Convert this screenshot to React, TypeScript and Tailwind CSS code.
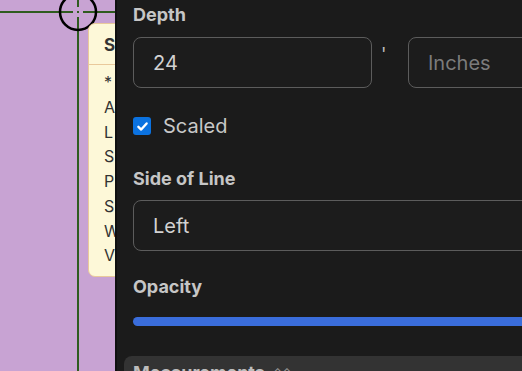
import React from "react";

const tipLines = ["*", "A", "L", "S", "P", "S", "W", "V"];

function Crosshair() {
  // marker drawn on the map canvas
  return (
    <svg className="absolute left-0 top-0" width="115" height="371" viewBox="0 0 115 371">
      <g stroke="#2f5b1f" strokeWidth="2">
        <line x1="0" y1="12" x2="73" y2="12" />
        <line x1="83" y1="12" x2="115" y2="12" />
        <line x1="78" y1="0" x2="78" y2="7" />
        <line x1="78" y1="17" x2="78" y2="371" />
        <line x1="77" y1="12" x2="79" y2="12" />
      </g>
      <circle cx="78" cy="12" r="18" fill="none" stroke="#000" strokeWidth="2.5" />
    </svg>
  );
}

function Tooltip() {
  return (
    <div className="absolute left-[88px] top-[23px] w-[160px] h-[254px] rounded-[7px] border border-[#e9c99b] bg-[#fdf8d8] text-[#333]">
      <div className="h-[41px] border-b border-[#e9c99b] pl-[15px] pt-[9px] text-[17px] font-bold leading-[24px]">
        Segment
      </div>
      <div className="pl-[15px] pt-[5px] text-[16px] leading-[24.75px]">
        {tipLines.map((l, i) => (
          <div key={i}>{l}</div>
        ))}
      </div>
    </div>
  );
}

function Field({ value, placeholder, width }: { value?: string; placeholder?: string; width: string }) {
  return (
    <div
      className={`${width} h-[51px] shrink-0 rounded-[8px] border border-[#5c5c5c] bg-[#1c1c1c] px-[19px] flex items-center text-[20px]`}
    >
      {value ? <span className="text-[#d2d2d2]">{value}</span> : <span className="text-[#7b7b7b]">{placeholder}</span>}
    </div>
  );
}

export default function App() {
  return (
    <div
      className="w-[522px] h-[371px] overflow-hidden flex bg-[#c8a3d3]"
      style={{ fontFamily: "Inter, 'Noto Sans', sans-serif" }}
    >
      {/* map canvas */}
      <div className="relative w-[115px] h-full shrink-0">
        <Crosshair />
        <Tooltip />
      </div>

      {/* side panel */}
      <div className="relative z-10 flex-1 h-full overflow-hidden bg-[#1b1b1b] border-l-2 border-[#101010]">
        <div className="w-[600px] pl-[16px] pt-[3px]">
          <div className="text-[18px] font-bold leading-[24px] text-[#c6c6c6]">Depth</div>
          <div className="mt-[10px] flex items-start">
            <Field value="24" width="w-[239px]" />
            <div className="w-[36px] pl-[9px] pt-[4px] text-[18px] text-[#bdbdbd]">'</div>
            <Field placeholder="Inches" width="w-[239px]" />
          </div>

          <div className="mt-[26px] flex items-center gap-[12px]">
            <div className="w-[18px] h-[18px] rounded-[3px] bg-[#0b72e0] flex items-center justify-center">
              <svg width="13" height="13" viewBox="0 0 12 12" fill="none">
                <path d="M2.2 6.3 4.8 8.8 9.8 3.2" stroke="#fff" strokeWidth="2.2" strokeLinecap="round" strokeLinejoin="round" />
              </svg>
            </div>
            <span className="text-[20px] leading-[24px] text-[#c8c8c8]">Scaled</span>
          </div>

          <div className="mt-[29px] text-[18px] font-bold leading-[24px] text-[#c6c6c6]">Side of Line</div>
          <div className="mt-[9px] w-[600px] h-[51px] rounded-[8px] border border-[#5c5c5c] bg-[#1c1c1c] px-[19px] flex items-center text-[20px] text-[#d2d2d2]">
            Left
          </div>

          <div className="mt-[24px] text-[18px] font-bold leading-[24px] text-[#c6c6c6]">Opacity</div>
          <div className="mt-[18px] h-[9px] w-[600px] rounded-full bg-[#3a6ddb]" />

          <div className="mt-[30px] -ml-[9px] h-[40px] rounded-tl-[8px] bg-[#333333] pl-[9px] pt-[5px] flex items-start gap-[8px]">
            <span className="text-[18px] font-bold leading-[24px] text-[#bdbdbd]">Measurements</span>
            <span className="text-[12px] leading-[24px] text-[#9a9a9a]">⌃⌃</span>
          </div>
        </div>
      </div>
    </div>
  );
}
